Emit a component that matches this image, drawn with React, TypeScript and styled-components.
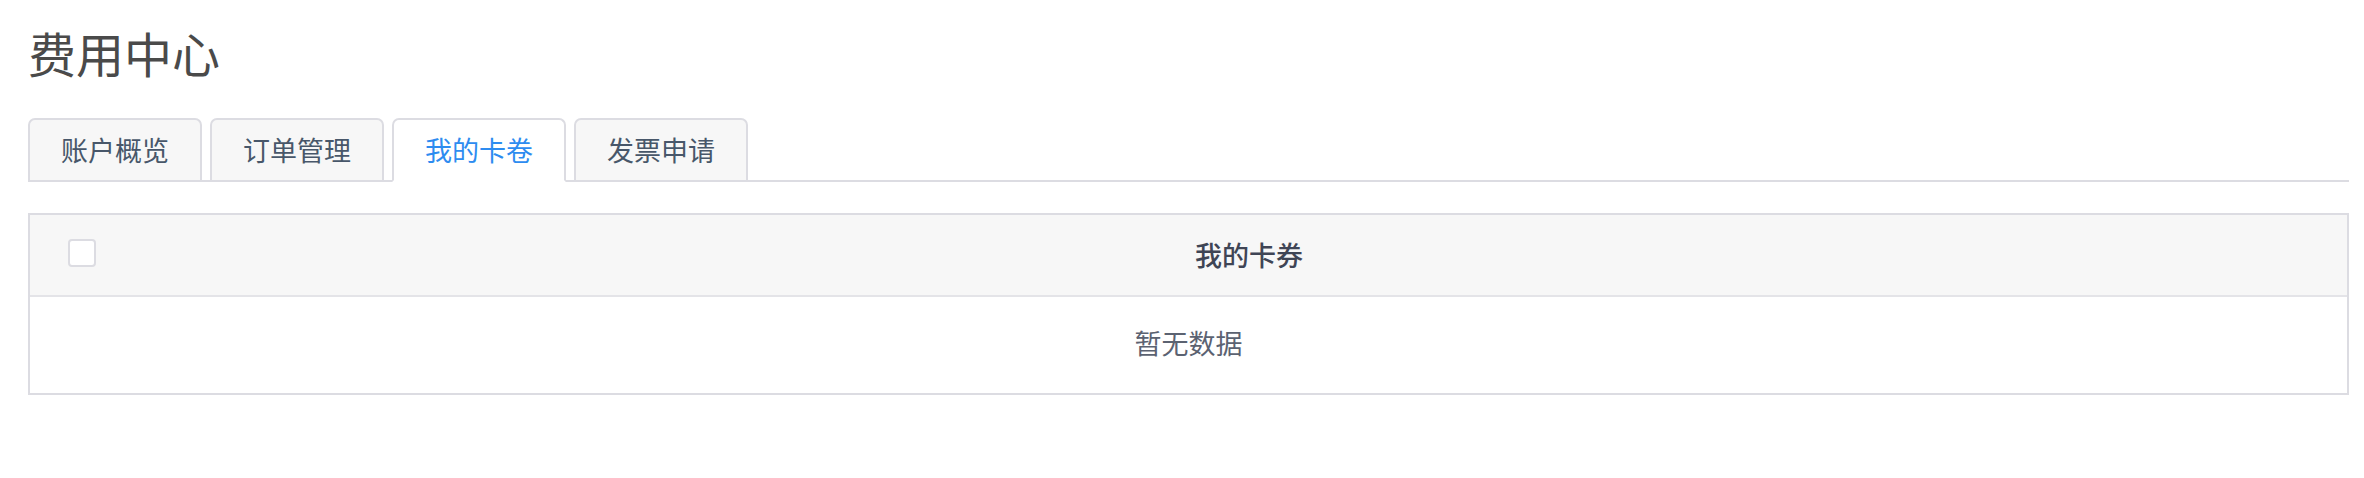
import styled, { createGlobalStyle } from "styled-components";

const GlobalStyle = createGlobalStyle`
  body {
    margin: 0;
    background: #ffffff;
    font-family: "Noto Sans CJK SC", "Noto Sans", sans-serif;
  }
`;

const Page = styled.div`
  padding: 0 15px 0 28px;
`;

const Title = styled.h1`
  margin: 0;
  padding-top: 24px;
  font-size: 48px;
  line-height: 56px;
  font-weight: 400;
  color: #4a4a4a;
`;

const TabBar = styled.div`
  display: flex;
  gap: 8px;
  margin-top: 38px;
  border-bottom: 2px solid #dcdce2;
`;

interface TabProps {
  $active?: boolean;
}

const Tab = styled.div<TabProps>`
  box-sizing: border-box;
  width: 174px;
  height: 64px;
  margin-bottom: -2px;
  padding-bottom: 2px;
  display: flex;
  align-items: center;
  justify-content: center;
  border: 2px solid #dcdce2;
  border-bottom-color: ${({ $active }) => ($active ? "#ffffff" : "#dcdce2")};
  border-radius: 7px 7px 0 0;
  background: ${({ $active }) => ($active ? "#ffffff" : "#f7f7f7")};
  color: ${({ $active }) => ($active ? "#2d8cf0" : "#48576a")};
  font-size: 27px;
  cursor: pointer;
`;

const Table = styled.div`
  margin-top: 31px;
  border: 2px solid #dcdce2;
`;

const HeadRow = styled.div`
  display: flex;
  align-items: center;
  height: 80px;
  background: #f7f7f7;
  border-bottom: 2px solid #e4e4e8;
`;

const CheckCell = styled.div`
  width: 121px;
  flex: none;
  display: flex;
  padding-left: 38px;
  box-sizing: border-box;
`;

const CheckBox = styled.span`
  box-sizing: border-box;
  width: 28px;
  height: 28px;
  margin-top: -4px;
  border: 2px solid #dcdce2;
  border-radius: 4px;
  background: #ffffff;
`;

const HeadCell = styled.div`
  flex: 1;
  padding-bottom: 2px;
  text-align: center;
  font-size: 27px;
  font-weight: 500;
  color: #3f4555;
`;

const EmptyRow = styled.div`
  box-sizing: border-box;
  height: 96px;
  padding-bottom: 6px;
  display: flex;
  align-items: center;
  justify-content: center;
  font-size: 27px;
  color: #5b6271;
`;

const tabs = ["账户概览", "订单管理", "我的卡卷", "发票申请"];

export default function App() {
  return (
    <Page>
      <GlobalStyle />
      <Title>费用中心</Title>
      <TabBar>
        {tabs.map((t, i) => (
          <Tab key={t} $active={i === 2}>
            {t}
          </Tab>
        ))}
      </TabBar>
      <Table>
        <HeadRow>
          <CheckCell>
            <CheckBox />
          </CheckCell>
          <HeadCell>我的卡券</HeadCell>
        </HeadRow>
        <EmptyRow>暂无数据</EmptyRow>
      </Table>
    </Page>
  );
}
